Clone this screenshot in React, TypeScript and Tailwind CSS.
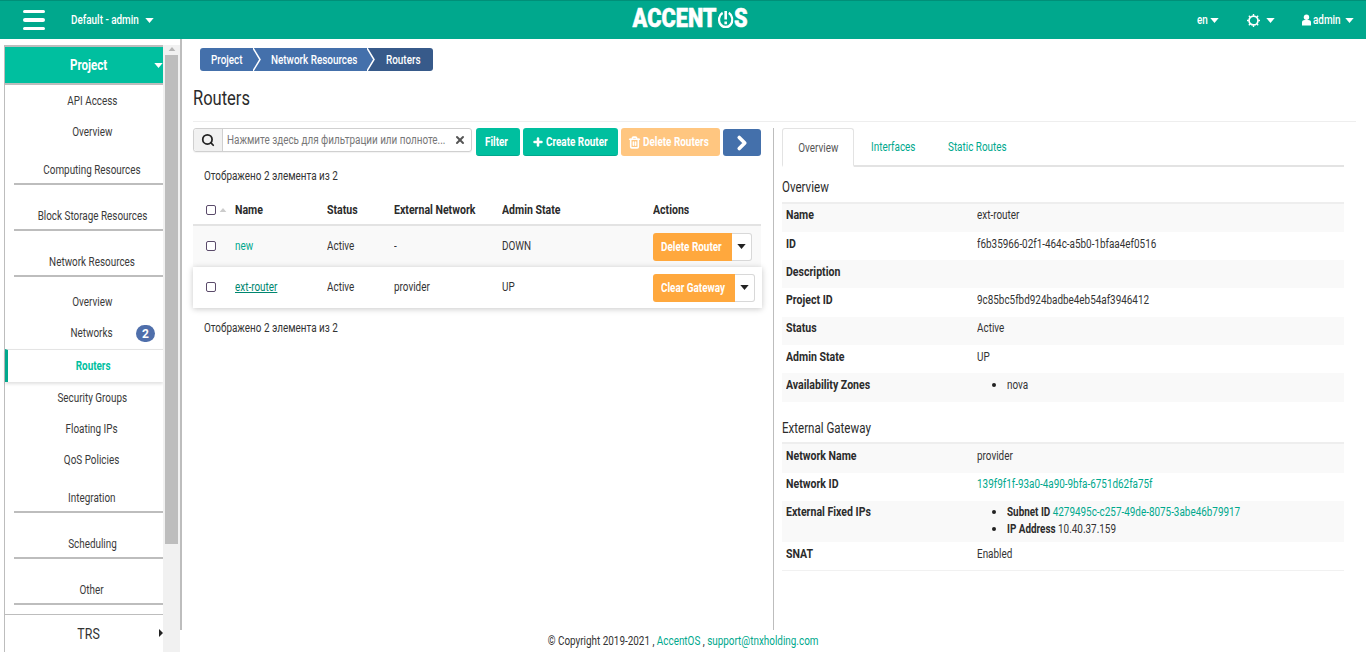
import React from "react";
import { Search, X, Plus, Trash2, ChevronRight } from "lucide-react";

const T = ({ children, bold, center, className = "" }: { children: React.ReactNode; bold?: boolean; center?: boolean; className?: string }) => (
  <span className={`inline-block whitespace-pre ${bold ? "scale-x-[.88]" : "scale-x-[.825]"} ${center ? "origin-center" : "origin-left"} ${className}`}>{children}</span>
);

const Caret = ({ className = "" }: { className?: string }) => (
  <svg viewBox="0 0 10 6" className={`w-[9px] h-[5px] shrink-0 ${className}`} fill="currentColor"><path d="M0 0h10L5 6z" /></svg>
);

const SideItem = ({ label }: { label: string }) => (
  <div className="h-[31px] shrink-0 flex items-center justify-center text-[#3a3a3a] pl-[16px]"><T center>{label}</T></div>
);

const SideGroup = ({ label, h }: { label: string; h: string }) => (
  <div className={`${h} shrink-0 flex flex-col justify-end ml-[9px]`}>
    <div className="pl-[7px] text-center text-[#3a3a3a] border-b-2 border-[#bdbdbd] pb-[6px] leading-[14px]"><T center>{label}</T></div>
  </div>
);

const Sidebar = () => (
  <div className="w-[180px] shrink-0 pl-1 pt-[6px] flex h-[613px] overflow-hidden">
    <div className="w-[159px] border-l-[1px] border-t-2 border-[#bdbdbd] flex flex-col h-full">
      <div className="h-[38px] shrink-0 bg-[#00bf9f] border-b-2 border-[#bdbdbd] relative flex items-center justify-center text-white font-bold text-[14px] pl-[10px]">
        <T center>Project</T>
        <Caret className="absolute right-0 top-[16px] text-white" />
      </div>
      <SideItem label="API Access" />
      <SideItem label="Overview" />
      <SideGroup label="Computing Resources" h="h-[38px]" />
      <SideGroup label="Block Storage Resources" h="h-[46px]" />
      <SideGroup label="Network Resources" h="h-[46px]" />
      <div className="h-[9px] shrink-0" />
      <SideItem label="Overview" />
      <div className="h-[32px] shrink-0 flex items-center justify-center relative text-[#3a3a3a] pl-[16px]">
        <T center>Networks</T>
        <span className="absolute right-[8px] top-[8px] w-[19px] h-[17px] rounded-full bg-[#4f6fab] text-white text-[12px] font-bold flex items-center justify-center">2</span>
      </div>
      <div className="h-[33px] shrink-0 border-l-[3px] border-[#00a88d] border-t border-t-[#e4e4e4] flex items-center justify-center text-[#00bf9f] font-bold shadow-[0_2px_3px_rgba(0,0,0,0.12)] relative pl-[16px] pb-[1px]">
        <T center>Routers</T>
      </div>
      <SideItem label="Security Groups" />
      <SideItem label="Floating IPs" />
      <SideItem label="QoS Policies" />
      <SideGroup label="Integration" h="h-[38px]" />
      <SideGroup label="Scheduling" h="h-[46px]" />
      <SideGroup label="Other" h="h-[46px]" />
      <div className="h-[10px] shrink-0 border-b border-[#bdbdbd]" />
      <div className="flex-1 relative flex items-center justify-center text-[15px] text-[#333] pl-[10px] pt-[1px]">
        <T center>TRS</T>
        <svg viewBox="0 0 5 10" className="absolute right-0 top-[14px] w-[4px] h-[8px] text-[#222]" fill="currentColor"><path d="M0 0l5 5-5 5z" /></svg>
      </div>
    </div>
    <div className="w-[17px] bg-[#f1f1f1] h-full relative flex flex-col items-center">
      <svg viewBox="0 0 10 6" className="w-[8px] h-[4px] mt-[2px] text-[#b5b5b5]" fill="currentColor"><path d="M0 6h10L5 0z" /></svg>
      <div className="w-[13px] h-[489px] mt-[4px] bg-[#bdbdbd] mr-[1px]" />
    </div>
  </div>
);

const Crumb = () => (
  <div className="flex h-[23px] items-stretch text-white font-medium ml-[18px] mt-[9px] whitespace-nowrap">
    <div className="bg-[#4470ab] rounded-l-[3px] w-[53px] pl-[11px] flex items-center"><T>Project</T></div>
    <svg viewBox="0 0 8 23" className="w-[8px] h-[23px] bg-[#4470ab] shrink-0" preserveAspectRatio="none"><path d="M0 0l7 11.5L0 23" fill="none" stroke="#fff" strokeWidth="1.5" /></svg>
    <div className="bg-[#4470ab] w-[106px] pl-[10px] flex items-center"><T>Network Resources</T></div>
    <svg viewBox="0 0 8 23" className="w-[8px] h-[23px] bg-[#375a8a] shrink-0" preserveAspectRatio="none"><path d="M0 0l7 11.5L0 23z" fill="#4470ab" /><path d="M0 0l7 11.5L0 23" fill="none" stroke="#fff" strokeWidth="1.5" /></svg>
    <div className="bg-[#375a8a] rounded-r-[3px] w-[58px] pl-[11px] flex items-center"><T>Routers</T></div>
  </div>
);

const Btn = ({ className = "", children }: { className?: string; children: React.ReactNode }) => (
  <button className={`h-[28px] rounded-[3px] text-white font-bold flex items-center ${className}`}>{children}</button>
);

const Toolbar = () => (
  <div className="flex items-start">
    <div className="w-[279px] h-[24px] border border-[#d0d0d0] rounded-[3px] flex items-center shadow-[0_1px_1px_rgba(0,0,0,0.05)]">
      <div className="w-[29px] h-full shrink-0 bg-[#f1f1f1] border-r border-[#d0d0d0] rounded-l-[3px] flex items-center justify-center text-[#222]">
        <Search size={14} strokeWidth={3} />
      </div>
      <div className="pl-[4px] flex-1 min-w-0 text-[#777]"><T>Нажмите здесь для фильтрации или полноте...</T></div>
      <X size={12} strokeWidth={4} className="mr-[5px] text-[#555] shrink-0" />
    </div>
    <Btn className="ml-[4px] w-[44px] bg-[#00bf9f] border-b border-[#00a88d] pl-[9px]"><T>Filter</T></Btn>
    <Btn className="ml-[3px] w-[95px] bg-[#00bf9f] border-b border-[#00a88d] pl-[9px] gap-[2px]"><Plus size={12} strokeWidth={5} className="shrink-0" /><T>Create Router</T></Btn>
    <Btn className="ml-[3px] w-[99px] bg-[#ffc680] pl-[7px] gap-[2px]"><Trash2 size={13} strokeWidth={3} className="shrink-0" /><T>Delete Routers</T></Btn>
    <button className="ml-[3px] mt-[1px] w-[38px] h-[27px] rounded-[3px] bg-[#4470ab] text-white flex items-center justify-center">
      <ChevronRight size={22} strokeWidth={4} />
    </button>
  </div>
);

const Check = () => <span className="block w-[10px] h-[10px] border border-[#5b4b6b] rounded-[2px] bg-white" />;

const rowCols = "grid grid-cols-[42px_92px_67px_108px_151px_1fr] items-center";

const SplitBtn = ({ label, w, total }: { label: string; w: string; total: string }) => (
  <div className={`flex h-[28px] ${total}`}>
    <div className={`${w} bg-[#ffa83d] rounded-l-[3px] text-white font-bold flex items-center pl-[8px]`}><T>{label}</T></div>
    <div className="flex-1 border border-[#d8d8d8] border-l-0 rounded-r-[3px] bg-white flex items-center justify-center text-[#222]"><Caret /></div>
  </div>
);

const Cell = ({ children }: { children: React.ReactNode }) => <div className="pb-[2px]"><T>{children}</T></div>;

const RouterTable = () => (
  <div className="mt-[12px] text-[#333]">
    <div className={`${rowCols} h-[31px] font-bold text-[#2b2b2b] border-b-2 border-[#e3e3e3]`}>
      <div className="pl-[13px] flex items-center gap-[3px]">
        <Check />
        <svg viewBox="0 0 10 6" className="w-[8px] h-[4px] text-[#ccc]" fill="currentColor"><path d="M0 6h10L5 0z" /></svg>
      </div>
      <div><T bold>Name</T></div><div><T bold>Status</T></div><div><T bold>External Network</T></div><div><T bold>Admin State</T></div><div><T bold>Actions</T></div>
    </div>
    <div className={`${rowCols} h-[41px] bg-[#f9f9f9]`}>
      <div className="pl-[13px] pb-[2px]"><Check /></div>
      <div className="pb-[2px] text-[#00a88d]"><T>new</T></div><Cell>Active</Cell><Cell>-</Cell><Cell>DOWN</Cell>
      <SplitBtn label="Delete Router" w="w-[79px]" total="w-[99px]" />
    </div>
    <div className={`${rowCols} h-[41px] w-[569px] bg-white shadow-[0_1px_6px_rgba(0,0,0,0.22)] relative`}>
      <div className="pl-[13px] pb-[2px]"><Check /></div>
      <div className="pb-[2px] text-[#00866f]"><T className="underline">ext-router</T></div><Cell>Active</Cell><Cell>provider</Cell><Cell>UP</Cell>
      <SplitBtn label="Clear Gateway" w="w-[82px]" total="w-[102px]" />
    </div>
    <div className="mt-[13px] pl-[11px] leading-[14px] text-[#333]"><T>Отображено 2 элемента из 2</T></div>
  </div>
);

const Row = ({ label, h, stripe, tight, children }: { label: string; h: string; stripe?: boolean; tight?: boolean; children?: React.ReactNode }) => (
  <div className={`flex ${h} ${stripe ? "bg-[#f9f9f9]" : "bg-white"} text-[#333] ${tight ? "pt-[4px]" : "pt-[5px]"}`}>
    <div className="w-[195px] shrink-0 pl-[4px] font-bold text-[#2b2b2b] leading-[14px]"><T bold>{label}</T></div>
    <div className="flex-1 leading-[14px]">{children}</div>
  </div>
);

const Dot = ({ children }: { children: React.ReactNode }) => (
  <div className="flex items-center h-[17px] pl-[15px]"><span className="w-[4px] h-[4px] rounded-full bg-[#222] mr-[11px] shrink-0" /><T>{children}</T></div>
);

const Details = () => (
  <div className="w-[562px] ml-[8px]">
    <div className="flex h-[39px] border-b-2 border-[#e3e3e3] items-stretch">
      <div className="w-[72px] h-[39px] border border-[#e3e3e3] border-b-white border-b-2 rounded-t-[3px] flex items-center justify-center text-[#555] bg-white pt-[1px]"><T center>Overview</T></div>
      <div className="ml-[17px] flex items-center text-[#00a88d] pt-[1px]"><T>Interfaces</T></div>
      <div className="ml-[23px] flex items-center text-[#00a88d] pt-[1px]"><T>Static Routes</T></div>
    </div>
    <div className="mt-[12px] text-[14px] leading-[16px] text-[#2b2b2b]"><T>Overview</T></div>
    <div className="mt-[7px] border-t-2 border-[#eeeeee]">
      <Row label="Name" h="h-[28px]" stripe tight><T>ext-router</T></Row>
      <Row label="ID" h="h-[28px]"><T>f6b35966-02f1-464c-a5b0-1bfaa4ef0516</T></Row>
      <Row label="Description" h="h-[28px]" stripe />
      <Row label="Project ID" h="h-[29px]"><T>9c85bc5fbd924badbe4eb54af3946412</T></Row>
      <Row label="Status" h="h-[28px]" stripe tight><T>Active</T></Row>
      <Row label="Admin State" h="h-[28px]"><T>UP</T></Row>
      <Row label="Availability Zones" h="h-[29px]" stripe><div className="-mt-[2px]"><Dot>nova</Dot></div></Row>
    </div>
    <div className="mt-[18px] text-[14px] leading-[16px] text-[#2b2b2b]"><T>External Gateway</T></div>
    <div className="mt-[6px] border-t-2 border-[#eeeeee]">
      <Row label="Network Name" h="h-[29px]" stripe><T>provider</T></Row>
      <Row label="Network ID" h="h-[28px]" tight><T className="text-[#00a88d]">139f9f1f-93a0-4a90-9bfa-6751d62fa75f</T></Row>
      <Row label="External Fixed IPs" h="h-[41px]" stripe tight>
        <div className="-mt-[2px]">
          <Dot><b className="font-bold text-[#2b2b2b]">Subnet ID</b> <span className="text-[#00a88d]">4279495c-c257-49de-8075-3abe46b79917</span></Dot>
          <Dot><b className="font-bold text-[#2b2b2b]">IP Address</b> 10.40.37.159</Dot>
        </div>
      </Row>
      <div className="border-b border-[#f1f1f1]"><Row label="SNAT" h="h-[28px]"><T>Enabled</T></Row></div>
    </div>
  </div>
);

export default function App() {
  return (
    <div className="w-[1366px] h-[652px] overflow-hidden relative bg-white text-[12px] leading-[14px]" style={{ fontFamily: "Roboto, sans-serif" }}>
      <header className="h-[39px] bg-[#00a88d] border-t border-[#008f78] flex items-center text-white relative">
        <div className="ml-[23px] w-[22px] flex flex-col gap-[5px]">
          <span className="block h-[3.5px] rounded-full bg-white" />
          <span className="block h-[3.5px] rounded-full bg-white" />
          <span className="block h-[3.5px] rounded-full bg-white" />
        </div>
        <div className="ml-[26px] flex items-center font-medium">
          <div className="w-[74px]"><T>Default - admin</T></div>
          <Caret />
        </div>
        <div className="absolute left-[634px] top-[8px] h-[20px] w-[113px] flex items-center justify-center text-[25px] font-black leading-[20px]">
          <span className="inline-flex items-center whitespace-nowrap scale-x-[.87] [-webkit-text-stroke:0.5px_white]">ACCENT
            <svg viewBox="0 0 18 18" className="w-[18px] h-[18px] mx-[1px] shrink-0" fill="none" stroke="#fff"><path d="M5.5 2.8a7.6 7.6 0 1 0 7 0" strokeWidth="2.6" /><path d="M9 1v8.5" strokeWidth="3" /><path d="M9 11.5v2.8" strokeWidth="3" /></svg>
            S</span>
        </div>
        <div className="absolute left-[1197px] top-0 h-full flex items-center font-medium">
          <div className="w-[13px]"><T>en</T></div><Caret />
        </div>
        <div className="absolute left-[1247px] top-0 h-full flex items-center gap-[6px]">
          <svg viewBox="0 0 14 14" className="w-[13px] h-[13px]" fill="none" stroke="#fff"><circle cx="7" cy="7" r="4.8" strokeWidth="1.8" /><path d="M7 0v2M7 12v2M0 7h2M12 7h2M2 2l1.4 1.4M10.6 10.6L12 12M2 12l1.4-1.4M10.6 3.4L12 2" strokeWidth="1.5" /></svg>
          <Caret />
        </div>
        <div className="absolute left-[1302px] top-0 h-full flex items-center font-medium">
          <svg viewBox="0 0 10 12" className="w-[9px] h-[12px] mr-[2px]" fill="#fff"><circle cx="5" cy="3" r="3" /><path d="M0 12V8.5C0 7 1.5 6 3 6h4c1.5 0 3 1 3 2.5V12z" /></svg>
          <div className="w-[32px]"><T>admin</T></div><Caret />
        </div>
      </header>
      <div className="flex">
        <Sidebar />
        <main className="flex-1 h-[591px] border-l-2 border-[#bdbdbd] min-w-0">
          <Crumb />
          <div className="ml-[11px] mr-[10px] mt-[16px] border-b border-[#eeeeee] text-[20px] leading-[22px] text-[#2b2b2b] h-[35px]"><T>Routers</T></div>
          <div className="flex ml-[11px] mt-[6px]">
            <div className="w-[568px] shrink-0">
              <Toolbar />
              <div className="mt-[13px] pl-[11px] leading-[14px] text-[#333]"><T>Отображено 2 элемента из 2</T></div>
              <RouterTable />
            </div>
            <div className="ml-[12px] w-[1px] bg-[#bdbdbd] h-[502px] shrink-0" />
            <Details />
          </div>
        </main>
      </div>
      <footer className="absolute left-0 right-0 bottom-[4px] text-center text-[#333] leading-[14px]">
        <T center>© Copyright 2019-2021 , <span className="text-[#00a88d]">AccentOS</span> , <span className="text-[#00a88d]">support@tnxholding.com</span></T>
      </footer>
    </div>
  );
}
